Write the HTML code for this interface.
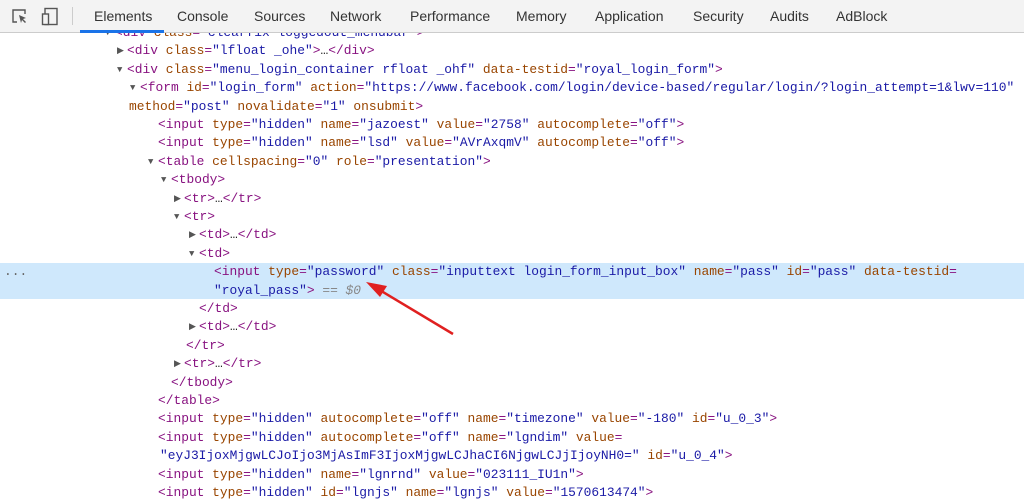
<!DOCTYPE html>
<html><head><meta charset="utf-8"><style>
body{margin:0;width:1024px;height:495px;overflow:hidden;background:#fff;position:relative;font-family:"Liberation Mono",monospace;}
.r{position:absolute;left:0;right:0;height:18.4px;line-height:18.4px;font-size:12.9px;white-space:pre;color:#222;}
.r span.c{position:absolute;}
.tg{color:#881280}.a{color:#994500}.v{color:#1a1aa6}.g{color:#888;font-style:italic}
.tri{position:absolute;font-size:9px;color:#555;}
.sel{background:#cfe8fc}
#tb{position:absolute;left:0;top:0;width:1024px;height:32px;background:#f3f3f3;border-bottom:1px solid #ccc;font-family:"Liberation Sans",sans-serif;font-size:14px;color:#333;z-index:2}
#tb span{position:absolute;top:8px}
</style></head><body>
<div id="tb">
<svg style="position:absolute;left:11px;top:8px" width="18" height="18" viewBox="0 0 18 18"><path d="M6 14H2V2h12v4" fill="none" stroke="#555" stroke-width="1.4"/><path d="M8 7l7 3-3 1 3 3-1 1-3-3-1 3z" fill="#555"/></svg>
<svg style="position:absolute;left:41px;top:7px" width="18" height="19" viewBox="0 0 18 19"><rect x="4" y="1.5" width="12" height="16" fill="none" stroke="#555" stroke-width="1.4"/><rect x="1.5" y="7" width="6" height="10.5" fill="#f3f3f3" stroke="#555" stroke-width="1.4"/></svg>
<div style="position:absolute;left:72px;top:7px;width:1px;height:18px;background:#ccc"></div>
<span style="left:94px">Elements</span>
<div style="position:absolute;left:80px;top:30px;width:84px;height:3px;background:#1a73e8"></div>
<span style="left:177px">Console</span>
<span style="left:254px">Sources</span>
<span style="left:330px">Network</span>
<span style="left:410px">Performance</span>
<span style="left:516px">Memory</span>
<span style="left:595px">Application</span>
<span style="left:693px">Security</span>
<span style="left:770px">Audits</span>
<span style="left:836px">AdBlock</span>
</div>

<div class="r" style="top:24px"><span class="c" style="left:115px"><span class="tri" style="left:-10px">▼</span><span class="tg">&lt;div</span> <span class="a">class</span><span class="tg">=</span><span class="v">"clearfix loggedout_menubar"</span><span class="tg">&gt;</span></span></div>
<div class="r" style="top:42.4px"><span class="c" style="left:127px"><span class="tri" style="left:-10px">▶</span><span class="tg">&lt;div</span> <span class="a">class</span><span class="tg">=</span><span class="v">"lfloat _ohe"</span><span class="tg">&gt;</span>…<span class="tg">&lt;/div&gt;</span></span></div>
<div class="r" style="top:60.8px"><span class="c" style="left:127px"><span class="tri" style="left:-10px">▼</span><span class="tg">&lt;div</span> <span class="a">class</span><span class="tg">=</span><span class="v">"menu_login_container rfloat _ohf"</span> <span class="a">data-testid</span><span class="tg">=</span><span class="v">"royal_login_form"</span><span class="tg">&gt;</span></span></div>
<div class="r" style="top:79.2px"><span class="c" style="left:140px"><span class="tri" style="left:-10px">▼</span><span class="tg">&lt;form</span> <span class="a">id</span><span class="tg">=</span><span class="v">"login_form"</span> <span class="a">action</span><span class="tg">=</span><span class="v">"https://www.facebook.com/login/device-based/regular/login/?login_attempt=1&amp;lwv=110"</span></span></div>
<div class="r" style="top:97.6px"><span class="c" style="left:129px"><span class="a">method</span><span class="tg">=</span><span class="v">"post"</span> <span class="a">novalidate</span><span class="tg">=</span><span class="v">"1"</span> <span class="a">onsubmit</span><span class="tg">&gt;</span></span></div>
<div class="r" style="top:116px"><span class="c" style="left:158px"><span class="tg">&lt;input</span> <span class="a">type</span><span class="tg">=</span><span class="v">"hidden"</span> <span class="a">name</span><span class="tg">=</span><span class="v">"jazoest"</span> <span class="a">value</span><span class="tg">=</span><span class="v">"2758"</span> <span class="a">autocomplete</span><span class="tg">=</span><span class="v">"off"</span><span class="tg">&gt;</span></span></div>
<div class="r" style="top:134.4px"><span class="c" style="left:158px"><span class="tg">&lt;input</span> <span class="a">type</span><span class="tg">=</span><span class="v">"hidden"</span> <span class="a">name</span><span class="tg">=</span><span class="v">"lsd"</span> <span class="a">value</span><span class="tg">=</span><span class="v">"AVrAxqmV"</span> <span class="a">autocomplete</span><span class="tg">=</span><span class="v">"off"</span><span class="tg">&gt;</span></span></div>
<div class="r" style="top:152.8px"><span class="c" style="left:158px"><span class="tri" style="left:-10px">▼</span><span class="tg">&lt;table</span> <span class="a">cellspacing</span><span class="tg">=</span><span class="v">"0"</span> <span class="a">role</span><span class="tg">=</span><span class="v">"presentation"</span><span class="tg">&gt;</span></span></div>
<div class="r" style="top:171.2px"><span class="c" style="left:171px"><span class="tri" style="left:-10px">▼</span><span class="tg">&lt;tbody&gt;</span></span></div>
<div class="r" style="top:189.6px"><span class="c" style="left:184px"><span class="tri" style="left:-10px">▶</span><span class="tg">&lt;tr&gt;</span>…<span class="tg">&lt;/tr&gt;</span></span></div>
<div class="r" style="top:208px"><span class="c" style="left:184px"><span class="tri" style="left:-10px">▼</span><span class="tg">&lt;tr&gt;</span></span></div>
<div class="r" style="top:226.4px"><span class="c" style="left:199px"><span class="tri" style="left:-10px">▶</span><span class="tg">&lt;td&gt;</span>…<span class="tg">&lt;/td&gt;</span></span></div>
<div class="r" style="top:244.8px"><span class="c" style="left:199px"><span class="tri" style="left:-10px">▼</span><span class="tg">&lt;td&gt;</span></span></div>
<div class="sel" style="position:absolute;left:0;right:0;top:263px;height:36px"></div>
<div class="r" style="top:263.2px"><span class="c" style="left:4px;color:#666">...</span><span class="c" style="left:214px"><span class="tg">&lt;input</span> <span class="a">type</span><span class="tg">=</span><span class="v">"password"</span> <span class="a">class</span><span class="tg">=</span><span class="v">"inputtext login_form_input_box"</span> <span class="a">name</span><span class="tg">=</span><span class="v">"pass"</span> <span class="a">id</span><span class="tg">=</span><span class="v">"pass"</span> <span class="a">data-testid</span><span class="tg">=</span></span></div>
<div class="r" style="top:281.6px"><span class="c" style="left:214px"><span class="v">"royal_pass"</span><span class="tg">&gt;</span> <span class="g">== $0</span></span></div>
<div class="r" style="top:300px"><span class="c" style="left:199px"><span class="tg">&lt;/td&gt;</span></span></div>
<div class="r" style="top:318.4px"><span class="c" style="left:199px"><span class="tri" style="left:-10px">▶</span><span class="tg">&lt;td&gt;</span>…<span class="tg">&lt;/td&gt;</span></span></div>
<div class="r" style="top:336.8px"><span class="c" style="left:186px"><span class="tg">&lt;/tr&gt;</span></span></div>
<div class="r" style="top:355.2px"><span class="c" style="left:184px"><span class="tri" style="left:-10px">▶</span><span class="tg">&lt;tr&gt;</span>…<span class="tg">&lt;/tr&gt;</span></span></div>
<div class="r" style="top:373.6px"><span class="c" style="left:171px"><span class="tg">&lt;/tbody&gt;</span></span></div>
<div class="r" style="top:392px"><span class="c" style="left:158px"><span class="tg">&lt;/table&gt;</span></span></div>
<div class="r" style="top:410.4px"><span class="c" style="left:158px"><span class="tg">&lt;input</span> <span class="a">type</span><span class="tg">=</span><span class="v">"hidden"</span> <span class="a">autocomplete</span><span class="tg">=</span><span class="v">"off"</span> <span class="a">name</span><span class="tg">=</span><span class="v">"timezone"</span> <span class="a">value</span><span class="tg">=</span><span class="v">"-180"</span> <span class="a">id</span><span class="tg">=</span><span class="v">"u_0_3"</span><span class="tg">&gt;</span></span></div>
<div class="r" style="top:428.8px"><span class="c" style="left:158px"><span class="tg">&lt;input</span> <span class="a">type</span><span class="tg">=</span><span class="v">"hidden"</span> <span class="a">autocomplete</span><span class="tg">=</span><span class="v">"off"</span> <span class="a">name</span><span class="tg">=</span><span class="v">"lgndim"</span> <span class="a">value</span><span class="tg">=</span></span></div>
<div class="r" style="top:447.2px"><span class="c" style="left:160px"><span class="v">"eyJ3IjoxMjgwLCJoIjo3MjAsImF3IjoxMjgwLCJhaCI6NjgwLCJjIjoyNH0="</span> <span class="a">id</span><span class="tg">=</span><span class="v">"u_0_4"</span><span class="tg">&gt;</span></span></div>
<div class="r" style="top:465.6px"><span class="c" style="left:158px"><span class="tg">&lt;input</span> <span class="a">type</span><span class="tg">=</span><span class="v">"hidden"</span> <span class="a">name</span><span class="tg">=</span><span class="v">"lgnrnd"</span> <span class="a">value</span><span class="tg">=</span><span class="v">"023111_IU1n"</span><span class="tg">&gt;</span></span></div>
<div class="r" style="top:484px"><span class="c" style="left:158px"><span class="tg">&lt;input</span> <span class="a">type</span><span class="tg">=</span><span class="v">"hidden"</span> <span class="a">id</span><span class="tg">=</span><span class="v">"lgnjs"</span> <span class="a">name</span><span class="tg">=</span><span class="v">"lgnjs"</span> <span class="a">value</span><span class="tg">=</span><span class="v">"1570613474"</span><span class="tg">&gt;</span></span></div>

<svg style="position:absolute;left:0;top:0;z-index:3" width="1024" height="495"><line x1="453" y1="334" x2="378" y2="289" stroke="#e02020" stroke-width="2.5"/><path d="M366 282 L387 286 L380 297 Z" fill="#e02020"/></svg>
</body></html>
